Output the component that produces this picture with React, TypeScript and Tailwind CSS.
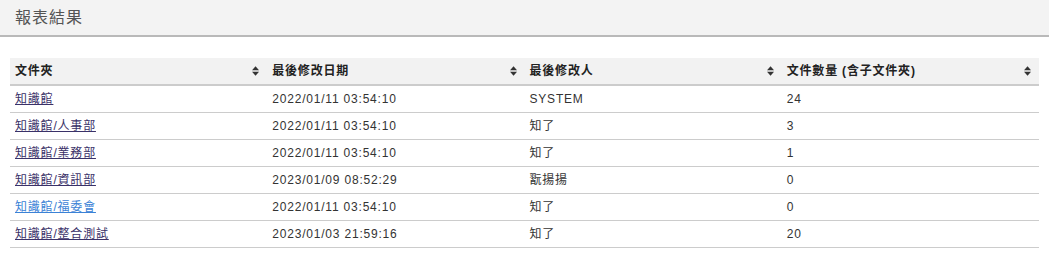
import React from "react";

const font = {
  fontFamily:
    '"Liberation Sans", Arial, "Noto Sans CJK TC", "Noto Sans CJK SC", sans-serif',
};

function SortIcon() {
  return (
    <svg width="7" height="10" viewBox="0 0 7 10" className="shrink-0">
      <polygon points="0,4.2 3.5,0.2 7,4.2" fill="#333" />
      <polygon points="0,5.8 3.5,9.8 7,5.8" fill="#333" />
    </svg>
  );
}

type Row = { folder: string; date: string; user: string; count: string; light?: boolean };

const rows: Row[] = [
  { folder: "知識館", date: "2022/01/11 03:54:10", user: "SYSTEM", count: "24" },
  { folder: "知識館/人事部", date: "2022/01/11 03:54:10", user: "知了", count: "3" },
  { folder: "知識館/業務部", date: "2022/01/11 03:54:10", user: "知了", count: "1" },
  { folder: "知識館/資訊部", date: "2023/01/09 08:52:29", user: "翫揚揚", count: "0" },
  { folder: "知識館/福委會", date: "2022/01/11 03:54:10", user: "知了", count: "0", light: true },
  { folder: "知識館/整合測試", date: "2023/01/03 21:59:16", user: "知了", count: "20" },
];

const headers = ["文件夾", "最後修改日期", "最後修改人", "文件數量 (含子文件夾)"];

export default function App() {
  return (
    <div className="w-[1049px] h-[273px] bg-white overflow-hidden" style={font}>
      <div className="h-[37px] bg-[#f3f3f3] border-b-2 border-[#b9b9b9] pl-[15px] flex items-center">
        <span className="text-[16px] leading-[20px] tracking-[1px] text-[#555555]">報表結果</span>
      </div>
      <div className="pt-[21px] px-[10px]">
        <table className="w-full table-fixed border-collapse text-[12px] tracking-[0.8px] text-[#333333]">
          <thead>
            <tr className="bg-[#f2f2f2]">
              {headers.map((h) => (
                <th
                  key={h}
                  className="h-[27px] p-0 border-b-2 border-[#cccccc] font-bold text-left text-[#222222]"
                >
                  <div className="flex items-center justify-between pl-[5px] pr-[8px] leading-[26px]">
                    <span>{h}</span>
                    <SortIcon />
                  </div>
                </th>
              ))}
            </tr>
          </thead>
          <tbody>
            {rows.map((r) => (
              <tr key={r.folder}>
                <td className="h-[27px] p-0 pl-[5px] border-b border-[#cccccc] leading-[26px]">
                  <a
                    href="#"
                    className={
                      "underline " + (r.light ? "text-[#3b82d6]" : "text-[#3a3168]")
                    }
                  >
                    {r.folder}
                  </a>
                </td>
                <td className="h-[27px] p-0 pl-[5px] border-b border-[#cccccc] leading-[26px]">{r.date}</td>
                <td className="h-[27px] p-0 pl-[5px] border-b border-[#cccccc] leading-[26px]">{r.user}</td>
                <td className="h-[27px] p-0 pl-[5px] border-b border-[#cccccc] leading-[26px]">{r.count}</td>
              </tr>
            ))}
          </tbody>
        </table>
      </div>
    </div>
  );
}
